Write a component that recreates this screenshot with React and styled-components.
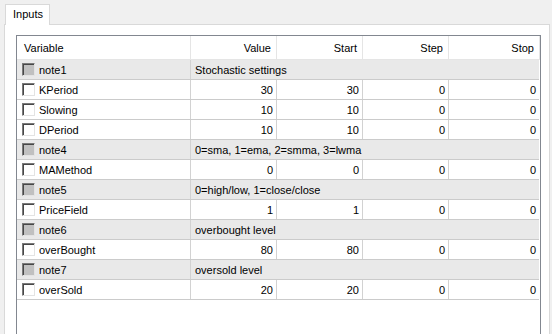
import React from 'react';
import styled, { createGlobalStyle } from 'styled-components';

const GlobalStyle = createGlobalStyle`
  html, body {
    margin: 0;
    padding: 0;
    overflow: hidden;
    background: #f0f0f0;
    font-family: "Liberation Sans", Tahoma, Arial, sans-serif;
    font-size: 11px;
    color: #000;
  }
`;

const Window = styled.div`
  padding-top: 4px;
  height: 334px;
  box-sizing: border-box;
`;

const TabStrip = styled.div`
  display: flex;
  padding-left: 5px;
  position: relative;
  z-index: 1;
`;

const Tab = styled.div`
  width: 45px;
  height: 21px;
  box-sizing: border-box;
  background: #fff;
  border: 1px solid #d9d9d9;
  border-bottom: none;
  padding: 3px 0 0 7px;
`;

const Panel = styled.div`
  margin-left: 4px;
  margin-top: -1px;
  width: 546px;
  height: 320px;
  box-sizing: border-box;
  background: #fff;
  border: 1px solid #d9d9d9;
  padding: 10px 8px 0 11px;
`;

const ListBox = styled.div`
  height: 310px;
  box-sizing: border-box;
  border: 1px solid #828790;
  background: #fff;
`;

const Row = styled.div`
  display: grid;
  grid-template-columns: 174px 86px 86px 86px 1fr;
  height: ${p => (p.$header ? 24 : 20)}px;
  box-sizing: border-box;
  border-bottom: 1px solid ${p => (p.$header ? '#e5e5e5' : '#cbcbcb')};
  background: ${p => (p.$note ? '#e9e9e9' : '#fff')};
  margin-right: ${p => (p.$header ? 0 : 1)}px;
`;

const Cell = styled.div`
  display: flex;
  align-items: center;
  justify-content: ${p => (p.$right ? 'flex-end' : 'flex-start')};
  padding: ${p => (p.$right ? `0 ${p.$header ? 5 : 3}px 0 0` : `0 0 0 ${p.$pad ?? 4}px`)};
  border-right: 1px solid ${p => (p.$header ? '#e5e5e5' : '#d2d2d2')};
  grid-column: ${p => (p.$span ? '2 / 6' : 'auto')};
  white-space: nowrap;
  overflow: hidden;
  &:last-child {
    border-right: ${p => (p.$header ? '1px solid #e5e5e5' : 'none')};
  }
`;

const NameCell = styled(Cell)`
  padding-left: 5px;
  gap: 4px;
`;

const Check = styled.span`
  width: 13px;
  height: 13px;
  box-sizing: border-box;
  border: 1px solid;
  border-color: #7a7a7a #e3e3e3 #e3e3e3 #7a7a7a;
  box-shadow: inset 1px 1px 0 #474747;
  background: ${p => (p.$disabled ? '#c0c0c0' : '#fff')};
  flex: none;
`;

const params = [
  { name: 'note1', note: 'Stochastic settings' },
  { name: 'KPeriod', v: [30, 30, 0, 0] },
  { name: 'Slowing', v: [10, 10, 0, 0] },
  { name: 'DPeriod', v: [10, 10, 0, 0] },
  { name: 'note4', note: '0=sma, 1=ema, 2=smma, 3=lwma' },
  { name: 'MAMethod', v: [0, 0, 0, 0] },
  { name: 'note5', note: '0=high/low, 1=close/close' },
  { name: 'PriceField', v: [1, 1, 0, 0] },
  { name: 'note6', note: 'overbought level' },
  { name: 'overBought', v: [80, 80, 0, 0] },
  { name: 'note7', note: 'oversold level' },
  { name: 'overSold', v: [20, 20, 0, 0] },
];

export default function App() {
  return (
    <Window>
      <GlobalStyle />
      <TabStrip>
        <Tab>Inputs</Tab>
      </TabStrip>
      <Panel>
        <ListBox>
          <Row $header>
            <Cell $header $pad={7}>Variable</Cell>
            <Cell $header $right>Value</Cell>
            <Cell $header $right>Start</Cell>
            <Cell $header $right>Step</Cell>
            <Cell $header $right>Stop</Cell>
          </Row>
          {params.map(p => (
            <Row key={p.name} $note={!!p.note}>
              <NameCell>
                <Check $disabled={!!p.note} />
                {p.name}
              </NameCell>
              {p.note ? (
                <Cell $span>{p.note}</Cell>
              ) : (
                p.v.map((x, i) => <Cell key={i} $right>{x}</Cell>)
              )}
            </Row>
          ))}
        </ListBox>
      </Panel>
    </Window>
  );
}
